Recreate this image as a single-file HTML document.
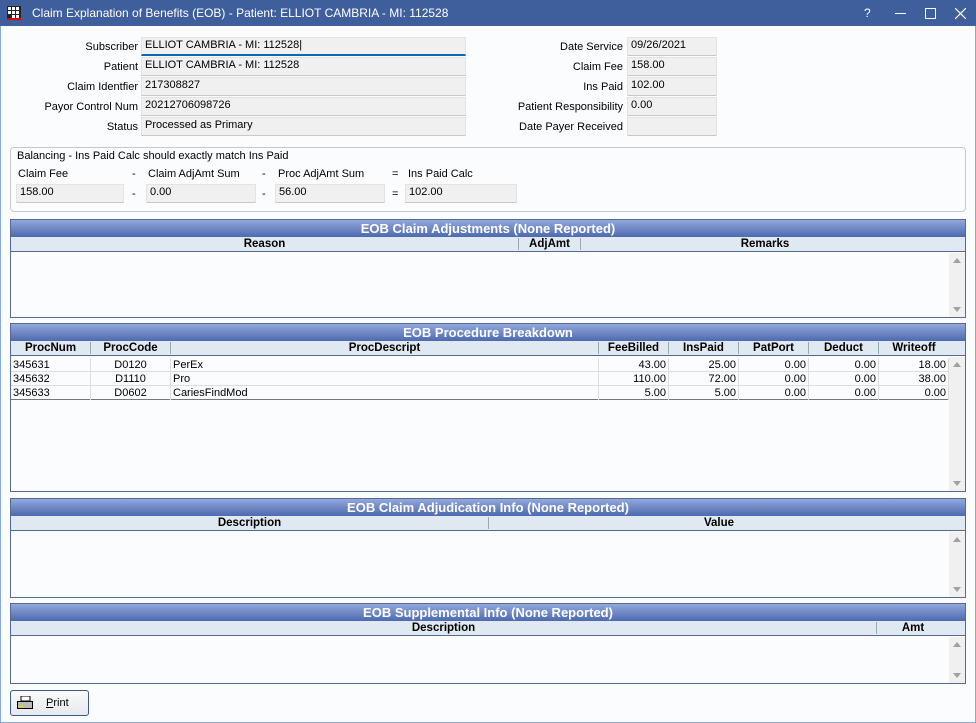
<!DOCTYPE html>
<html><head><meta charset="utf-8"><style>
*{box-sizing:border-box;margin:0;padding:0}
body{width:976px;height:723px;overflow:hidden;background:#fbfcfe;font-family:"Liberation Sans",Arial,sans-serif;font-size:11px;color:#000;position:relative}
.abs{position:absolute}
#win{position:absolute;left:0;top:0;width:976px;height:723px;border:1px solid #8aa7dc;border-top:none}
#title{position:absolute;left:0;top:0;width:976px;height:26px;background:#3f5e9c;color:#fff;font-size:12px}
.lbl{position:absolute;text-align:right;white-space:nowrap}
.inp{position:absolute;height:19px;background:#f0f0f0;border:1px solid #e3e3e3;border-bottom:1px solid #c8c8c8;padding:1px 3px;white-space:nowrap}
.grid{position:absolute;left:10px;width:956px;border:1px solid #546a91;background:#fbfcfe}
.gt{height:17px;background:linear-gradient(#93a8dc,#4d6aae);color:#fff;font-weight:bold;font-size:13px;text-align:center;line-height:17px}
.gh{position:relative;height:15px;background:#e0e8f2;border-bottom:1px solid #546a91;font-weight:bold;font-size:11.5px}
.gh span{position:absolute;top:1px;text-align:center;border-right:1px solid #9aa}
.sb{position:absolute;right:0;width:16px;background:#f0f0f0}
.up,.dn{position:absolute;left:4px;width:0;height:0;border-left:4px solid transparent;border-right:4px solid transparent}
.up{border-bottom:5px solid #a0a0a0;top:5px}
.dn{border-top:5px solid #a0a0a0;bottom:5px}
.row{position:absolute;left:0;height:14px;width:937px;border-bottom:1px solid #ddd}
.row span{position:absolute;top:0;border-right:1px solid #ddd;height:14px;padding:0 2px;line-height:14px}
.r{text-align:right}.c{text-align:center}
</style></head><body>
<div id="win"></div>
<div id="title">
 <svg class="abs" style="left:7px;top:6px" width="14" height="14"><rect x="0" y="0" width="14" height="14" fill="#222"/><g fill="#fff"><rect x="1" y="1" width="3" height="3"/><rect x="5" y="1" width="3" height="3"/><rect x="9" y="1" width="3" height="3"/><rect x="1" y="5" width="3" height="3"/><rect x="5" y="5" width="3" height="3"/><rect x="9" y="5" width="3" height="3"/><rect x="5" y="9" width="3" height="3"/><rect x="9" y="9" width="3" height="3"/></g><rect x="0" y="12" width="14" height="2" fill="#d00"/></svg>
 <div class="abs" style="left:32px;top:6px">Claim Explanation of Benefits (EOB) - Patient: ELLIOT CAMBRIA - MI: 112528</div>
 <div class="abs" style="left:864px;top:6px">?</div>
 <div class="abs" style="left:895px;top:13px;width:11px;height:1px;background:#fff"></div>
 <div class="abs" style="left:925px;top:8px;width:11px;height:11px;border:1px solid #fff"></div>
 <svg class="abs" style="left:955px;top:8px" width="11" height="11"><path d="M0 0L11 11M11 0L0 11" stroke="#fff" stroke-width="1.2"/></svg>
</div>

<div class="lbl" style="right:838px;top:41px">Subscriber</div>
<div class="lbl" style="right:838px;top:61px">Patient</div>
<div class="lbl" style="right:838px;top:81px">Claim Identfier</div>
<div class="lbl" style="right:838px;top:101px">Payor Control Num</div>
<div class="lbl" style="right:838px;top:121px">Status</div>
<div class="inp" style="left:141px;top:37px;width:325px;border-bottom:2px solid #0a66b8">ELLIOT CAMBRIA - MI: 112528|</div>
<div class="inp" style="left:141px;top:57px;width:325px">ELLIOT CAMBRIA - MI: 112528</div>
<div class="inp" style="left:141px;top:77px;width:325px">217308827</div>
<div class="inp" style="left:141px;top:97px;width:325px">20212706098726</div>
<div class="inp" style="left:141px;top:117px;width:325px">Processed as Primary</div>

<div class="lbl" style="right:353px;top:41px">Date Service</div>
<div class="lbl" style="right:353px;top:61px">Claim Fee</div>
<div class="lbl" style="right:353px;top:81px">Ins Paid</div>
<div class="lbl" style="right:353px;top:101px">Patient Responsibility</div>
<div class="lbl" style="right:353px;top:121px">Date Payer Received</div>
<div class="inp" style="left:627px;top:37px;width:90px">09/26/2021</div>
<div class="inp" style="left:627px;top:57px;width:90px">158.00</div>
<div class="inp" style="left:627px;top:77px;width:90px">102.00</div>
<div class="inp" style="left:627px;top:97px;width:90px">0.00</div>
<div class="inp" style="left:627px;top:117px;width:90px"></div>

<div class="abs" style="left:10px;top:147px;width:956px;height:65px;border:1px solid #c8c8c8;border-radius:4px"></div>
<div class="abs" style="left:17px;top:150px">Balancing - Ins Paid Calc should exactly match Ins Paid</div>
<div class="abs" style="left:18px;top:168px">Claim Fee</div>
<div class="abs" style="left:132px;top:168px">-</div>
<div class="abs" style="left:148px;top:168px">Claim AdjAmt Sum</div>
<div class="abs" style="left:262px;top:168px">-</div>
<div class="abs" style="left:278px;top:168px">Proc AdjAmt Sum</div>
<div class="abs" style="left:392px;top:168px">=</div>
<div class="abs" style="left:408px;top:168px">Ins Paid Calc</div>
<div class="inp" style="left:16px;top:184px;width:108px">158.00</div>
<div class="abs" style="left:132px;top:188px">-</div>
<div class="inp" style="left:146px;top:184px;width:110px">0.00</div>
<div class="abs" style="left:262px;top:188px">-</div>
<div class="inp" style="left:275px;top:184px;width:110px">56.00</div>
<div class="abs" style="left:392px;top:188px">=</div>
<div class="inp" style="left:405px;top:184px;width:112px">102.00</div>

<div class="grid" style="top:219px;height:99px">
 <div class="gt">EOB Claim Adjustments (None Reported)</div>
 <div class="gh"><span style="left:0;width:508px">Reason</span><span style="left:508px;width:62px">AdjAmt</span><span style="left:570px;width:368px;border:none">Remarks</span></div>
 <div class="sb" style="top:33px;height:64px"><div class="up"></div><div class="dn"></div></div>
</div>

<div class="grid" style="top:323px;height:169px">
 <div class="gt">EOB Procedure Breakdown</div>
 <div class="gh"><span style="left:0;width:80px">ProcNum</span><span style="left:80px;width:80px">ProcCode</span><span style="left:160px;width:428px">ProcDescript</span><span style="left:588px;width:70px">FeeBilled</span><span style="left:658px;width:70px">InsPaid</span><span style="left:728px;width:70px">PatPort</span><span style="left:798px;width:70px">Deduct</span><span style="left:868px;width:70px;border:none">Writeoff</span></div>
 <div class="row" style="top:34px"><span style="left:0;width:80px">345631</span><span class="c" style="left:80px;width:80px">D0120</span><span style="left:160px;width:428px">PerEx</span><span class="r" style="left:588px;width:70px">43.00</span><span class="r" style="left:658px;width:70px">25.00</span><span class="r" style="left:728px;width:70px">0.00</span><span class="r" style="left:798px;width:70px">0.00</span><span class="r" style="left:868px;width:70px">18.00</span></div>
 <div class="row" style="top:48px"><span style="left:0;width:80px">345632</span><span class="c" style="left:80px;width:80px">D1110</span><span style="left:160px;width:428px">Pro</span><span class="r" style="left:588px;width:70px">110.00</span><span class="r" style="left:658px;width:70px">72.00</span><span class="r" style="left:728px;width:70px">0.00</span><span class="r" style="left:798px;width:70px">0.00</span><span class="r" style="left:868px;width:70px">38.00</span></div>
 <div class="row" style="top:62px;border-bottom:1px solid #777"><span style="left:0;width:80px">345633</span><span class="c" style="left:80px;width:80px">D0602</span><span style="left:160px;width:428px">CariesFindMod</span><span class="r" style="left:588px;width:70px">5.00</span><span class="r" style="left:658px;width:70px">5.00</span><span class="r" style="left:728px;width:70px">0.00</span><span class="r" style="left:798px;width:70px">0.00</span><span class="r" style="left:868px;width:70px">0.00</span></div>
 <div class="sb" style="top:33px;height:134px"><div class="up"></div><div class="dn"></div></div>
</div>

<div class="grid" style="top:498px;height:100px">
 <div class="gt">EOB Claim Adjudication Info (None Reported)</div>
 <div class="gh"><span style="left:0;width:478px">Description</span><span style="left:478px;width:460px;border:none">Value</span></div>
 <div class="sb" style="top:33px;height:65px"><div class="up"></div><div class="dn"></div></div>
</div>

<div class="grid" style="top:603px;height:81px">
 <div class="gt">EOB Supplemental Info (None Reported)</div>
 <div class="gh"><span style="left:0;width:866px">Description</span><span style="left:866px;width:72px;border:none">Amt</span></div>
 <div class="sb" style="top:33px;height:46px"><div class="up"></div><div class="dn"></div></div>
</div>

<div class="abs" style="left:10px;top:690px;width:79px;height:26px;border:1px solid #3c5a8a;border-radius:3px;background:linear-gradient(#fafafa,#e6e9ee)">
 <svg class="abs" style="left:6px;top:5px" width="16" height="14"><rect x="4" y="0" width="9" height="5" fill="#fff" stroke="#000"/><rect x="0.5" y="5.5" width="15" height="7" fill="#bbb" stroke="#000"/><rect x="3" y="9" width="4" height="2" fill="#dd0"/></svg>
 <div class="abs" style="left:35px;top:6px"><u>P</u>rint</div>
</div>
</body></html>
